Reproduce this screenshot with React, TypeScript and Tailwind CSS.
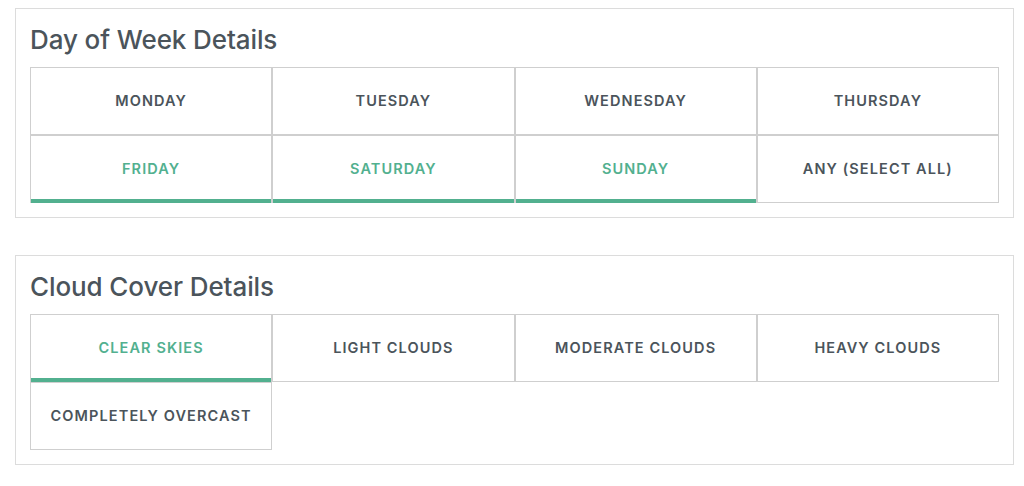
import React from "react";

type Opt = { label: string; active?: boolean };

const days: Opt[] = [
  { label: "MONDAY" },
  { label: "TUESDAY" },
  { label: "WEDNESDAY" },
  { label: "THURSDAY" },
  { label: "FRIDAY", active: true },
  { label: "SATURDAY", active: true },
  { label: "SUNDAY", active: true },
  { label: "ANY (SELECT ALL)" },
];

const clouds: Opt[] = [
  { label: "CLEAR SKIES", active: true },
  { label: "LIGHT CLOUDS" },
  { label: "MODERATE CLOUDS" },
  { label: "HEAVY CLOUDS" },
  { label: "COMPLETELY OVERCAST" },
];

function Cell({ o }: { o: Opt }) {
  return (
    <div
      className={
        "relative h-[68px] border border-[#cfcfcf] flex items-center justify-center text-[14.5px] font-semibold tracking-[1.1px] " +
        (o.active ? "text-[#52b08f]" : "text-[#4b545b]")
      }
    >
      <span className="-mt-[1px]">{o.label}</span>
      {o.active && <div className="absolute left-0 right-0 -bottom-[1px] h-[4px] bg-[#52b08f]" />}
    </div>
  );
}

function Section({ title, opts }: { title: string; opts: Opt[] }) {
  return (
    <div className="w-[999px] border border-[#dcdcdc] px-[14px] pt-[17px] pb-[14px]">
      <div className="text-[26px] leading-[28px] font-medium tracking-[-0.1px] text-[#4b545b] mb-[13px]">{title}</div>
      <div className="grid grid-cols-4">
        {opts.map((o) => (
          <Cell key={o.label} o={o} />
        ))}
      </div>
    </div>
  );
}

export default function App() {
  return (
    <div
      className="bg-white w-[1024px] h-[486px] pl-[15px] pt-[8px] flex flex-col gap-[37px]"
      style={{ fontFamily: 'Inter, "Liberation Sans", Arial, sans-serif' }}
    >
      <Section title="Day of Week Details" opts={days} />
      <Section title="Cloud Cover Details" opts={clouds} />
    </div>
  );
}
